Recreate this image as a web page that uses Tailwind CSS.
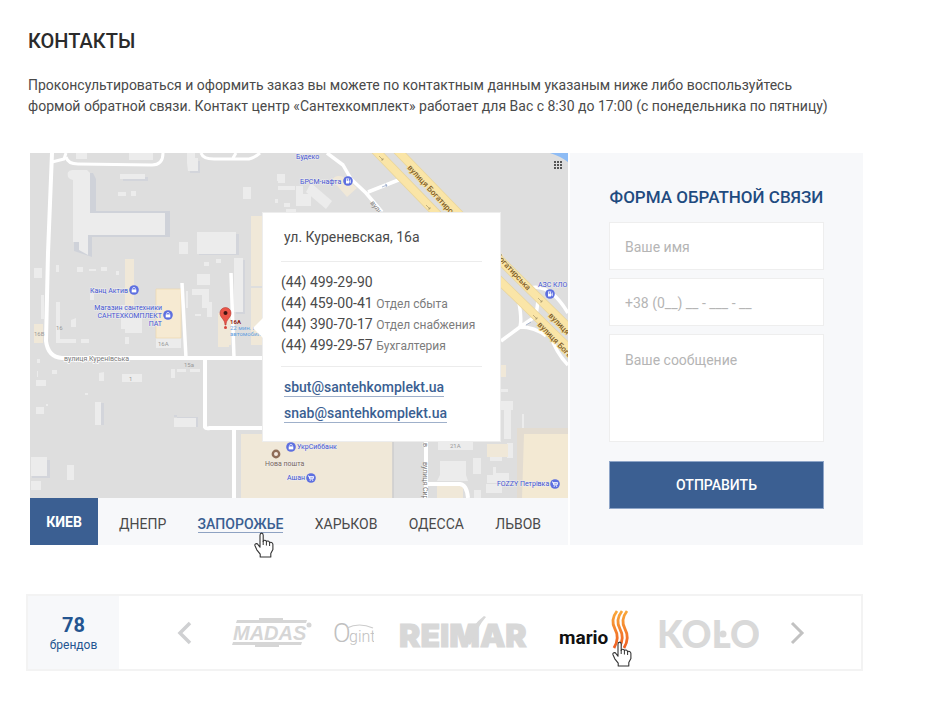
<!DOCTYPE html>
<html lang="ru">
<head>
    <meta charset="UTF-8">
    <meta name="viewport" content="width=device-width, initial-scale=1.0">
    <title>Контакты</title>
    <script src="https://cdn.jsdelivr.net/npm/@tailwindcss/browser@4"></script>
</head>
<body class="bg-white font-[Roboto,sans-serif] text-[14px] text-[#4a4a4a]">
    <!-- Shared shapes -->
    <svg class="hidden">
        <symbol id="hand" viewBox="0 0 20 26">
            <path d="M6 14V3.2C6 .4 9.2.4 9.2 3.2V9.5C9.6 7.6 12.2 7.8 12.4 9.8C13 8.4 15.4 8.8 15.6 10.8C16.4 9.8 18.9 10.2 18.9 12.4V17.5L16.8 21.5V25H6.2V22.2L2.8 17.8L1 13.8C.2 11.6 2.8 10.8 4.2 12.8L6 15.2Z" fill="#fff" stroke="#333" stroke-width="1.1" stroke-linejoin="round"/>
            <path d="M9.2 9V13M12.4 10V13.5M15.6 11V14" stroke="#333" fill="none"/>
        </symbol>
        <symbol id="bag" viewBox="0 0 10 10">
            <circle cx="5" cy="5" r="4.8" fill="#5d6fe0"/>
            <path d="M2.7 4.4H7.3V7.4H2.7Z" fill="#fff"/>
            <path d="M3.6 4.4V3.8A1.4 1.4 0 0 1 6.4 3.8V4.4" fill="none" stroke="#fff" stroke-width=".7"/>
        </symbol>
        <symbol id="cart" viewBox="0 0 10 10">
            <circle cx="5" cy="5" r="4.8" fill="#5d6fe0"/>
            <path d="M2 3H3L3.8 6H7L7.7 3.6H3.4L4 5H7.2" fill="none" stroke="#fff" stroke-width=".9"/>
            <circle cx="4.2" cy="7.2" r=".6" fill="#fff"/><circle cx="6.7" cy="7.2" r=".6" fill="#fff"/>
        </symbol>
        <symbol id="fuel" viewBox="0 0 10 10">
            <circle cx="5" cy="5" r="4.8" fill="#5d6fe0"/>
            <path d="M3 2.5H6V7.5H3Z" fill="#fff"/><path d="M3.7 3.3H5.3V4.6H3.7Z" fill="#5d6fe0"/>
            <path d="M6 5H6.8V6.8H7.5V3.8L6.7 3" fill="none" stroke="#fff" stroke-width=".6"/>
        </symbol>
    </svg>

    <main class="pt-[29px] pr-17 pb-12 pl-[26px]">
        <header class="pl-0.5">
            <h1 class="text-[20px] leading-6 font-medium text-[#2b2b2b]">КОНТАКТЫ</h1>
            <p class="mt-[22px] leading-[21px]">
                Проконсультироваться и оформить заказ вы можете по контактным данным указаным ниже либо воспользуйтесь<br>
                формой обратной связи. Контакт центр «Сантехкомплект» работает для Вас с 8:30 до 17:00 (с понедельника по пятницу)
            </p>
        </header>

        <section class="mt-9 flex gap-0.5 pl-1">
            <!-- Map and city tabs -->
            <div class="flex flex-1 flex-col">
                <div class="relative flex-1">
                    <svg class="absolute inset-0 h-full w-full" viewBox="0 0 538 345" preserveAspectRatio="xMidYMid slice" font-family="Roboto, sans-serif">
                        <rect width="538" height="345" fill="#dedede"/>
                        <path d="M520 0H538V9Q530 3 520 0Z" fill="#8ebcf5"/>
                        <!-- Building shadows -->
                        <path d="M44 20H63L66 26V58H140V84H62V104L44 98Z" fill="#cfd2d9"/>
                        <g fill="#d3d5db">
                            <path d="M93 24H118V28H93ZM160 8H170V20H160ZM169 81H209V102H169ZM206 107H215V161H206ZM68 250H74V272H68ZM144 264H168V274H144ZM2 307H20V325H2ZM144 265H147V262H144ZM454 237H465V285H454Z"/>
                        </g>
                        <!-- Buildings -->
                        <g fill="#ececec">
                            <path d="M42 17Q36 18 38 24Q40 27 43 27V89H49V97L58 102V82H135V60H60V20L57 17Z"/>
                            <path d="M90 21H115V26H90ZM88 39H96V43H88ZM101 38H106V43H101ZM46 0H57V6H46ZM99 0H123V7H99ZM157 0H165V5H168V18H158L157 10ZM167 79H206V101H167ZM149 89H158V101H149ZM204 105H213V159H204ZM213 34H221V46H213ZM248 21H255V30H248V28H247V21ZM248 33H265V37H248ZM266 33H273V45H266ZM254 50H260V54H254ZM256 56H266V59H256ZM245 46H248V50H245ZM4 115H12V125H4ZM26 112H29V119H26ZM47 114H53V119H47ZM59 116H66V118H59ZM71 114H77V118H71ZM86 118H89V122H86ZM174 109H179V113H174ZM186 106H191V110H186ZM167 121H180V132H167ZM162 136H179V155H172V142H162ZM165 161H171V163H165ZM177 149H182V164H177ZM156 138H158V155H156ZM11 142H14V166H11ZM26 149H30V186H46V190H26ZM41 167L46 165V174H41ZM91 152H95V176H91ZM95 162H112V180H95ZM95 184H99V191H95ZM51 186H59V190H51ZM60 140H64V147H60ZM126 185H151V195H126ZM6 227H16V233H6ZM6 254H14V261H6ZM22 217H27V221H22ZM69 220L74 219V228H69ZM92 221H112V229H92ZM141 216H145V225H141ZM147 216H156V219H147ZM160 216H170V219H160ZM65 249H71V272H65ZM144 265H166V274H144ZM1 304H17V323H1ZM37 312H44V327H37ZM1 328H11V337H1ZM54 188H56V190H54ZM7 206H10V210H7ZM7 218H8V224H7ZM55 240H58V242H55ZM16 251H18V253H16Z"/>
                            <path d="M266 41H281V53H266ZM281 30L302 48L296 56L276 39ZM471 248H483V257H481V286H474V257H471ZM492 261H494V275H492ZM408 289H443V297H408ZM410 308H436V322L438 328H407L410 322ZM443 305H451V321H443ZM457 322H463V314H466V320H479V330H457ZM456 331H472V340H456ZM444 337H451V345H444ZM477 290H483V305H477ZM471 236H478V239H471ZM460 303H472V308H460Z"/>
                        </g>
                        <!-- Highlighted blocks -->
                        <g fill="#f0e8d8">
                            <path d="M95 106H104V155H95ZM221 63H232V133H221ZM221 135H232V192H221ZM188 160H201V192H188ZM4 171H13V190H4ZM188 190H199V194H188ZM211 281H363V345H211Z"/>
                            <path d="M457 291H478V304H457ZM407 332Q419 328 433 334V345H407ZM471 212H476V224H471ZM302 27Q306 20 316 25L327 35L317 44Z"/>
                        </g>
                        <path d="M126 136H151V185H126Z" fill="#f6ead2" stroke="#eed9af" stroke-width=".7"/>
                        <path d="M363 281V345" stroke="#cdcdce" stroke-width="1.5"/>
                        <path d="M487 275H538V345H487Z" fill="#e3dcd1"/>
                        <path d="M494 281H538V345H492Z" fill="#f3e9d3"/>
                        <!-- Streets -->
                        <g fill="none" stroke="#fff" stroke-linejoin="round">
                            <path d="M22 0L18 100L16 188Q18 204 32 205L232 205" stroke-width="4"/>
                            <path d="M22 9L34 6L36 0M36 4Q38 11 48 11L122 12Q133 12 133 0M171 0Q173 6 184 6H219Q224 5 230 0M203 5L206 0" stroke-width="3"/>
                            <path d="M152 130L156 205M201 120L204 205" stroke-width="3.5"/>
                            <path d="M175 205V274Q176 276 180 275H232M204 275V345" stroke-width="4"/>
                            <path d="M297 0L313 12L321 26L336 40L352 59M338 39L371 26" stroke-width="3.5"/>
                            <path d="M396 289V345M398 331H430Q437 332 438 345" stroke-width="4"/>
                            <path d="M489 150Q492 166 490 174L471 188M508 148L506 163L490 174Q505 174 516 183M500 135Q520 130 538 160M520 181Q526 200 538 212" stroke-width="3.5"/>
                        </g>
                        <!-- Highways -->
                        <g fill="none" stroke="#e8d59d" stroke-width="9">
                            <path d="M343 -5L408 62L471 129L548 204M365 -5L430 62L471 108L548 184"/>
                        </g>
                        <g fill="none" stroke="#fae5a7" stroke-width="7.5">
                            <path d="M343 -5L408 62L471 129L548 204M365 -5L430 62L471 108L548 184"/>
                        </g>
                        <g fill="none" stroke="#9c8961" stroke-width=".6">
                            <path d="M349 3L353 7M351 7H353V5M396 52L400 56M398 56H400V54M503 162L507 166M505 166H507V164M508 145L512 149M510 149H512V147"/>
                            <path d="M352 34L357 32M355 31L357 32L356 34M496 172L501 169" stroke="#7b90ba"/>
                        </g>
                        <g fill="#7f5d28" stroke="#fae5a7" stroke-width="1.5" paint-order="stroke" font-size="8" font-weight="500">
                            <text transform="translate(377 15) rotate(47)">вулиця Богатирська</text>
                            <text transform="translate(465 103) rotate(47)">Богатирська</text>
                            <text transform="translate(518 163) rotate(46)">вулиця</text>
                            <text transform="translate(507 172) rotate(46)">вулиця Богатирська</text>
                        </g>
                        <!-- Street names and house numbers -->
                        <g fill="#777" font-size="7">
                            <text x="34" y="208" stroke="#fff" stroke-width="1.5" paint-order="stroke">вулиця Куренівська</text>
                            <text transform="translate(340 50) rotate(52)">вулиця</text>
                            <text transform="translate(393 290) rotate(90)" stroke="#fff" stroke-width="1" paint-order="stroke">в</text>
                            <text transform="translate(393 309) rotate(90)">вулиця Сирецька</text>
                        </g>
                        <g fill="#999" font-size="6">
                            <text x="128" y="193">16А</text>
                            <text x="4" y="183">16В</text>
                            <text x="26" y="177">16</text>
                            <text x="154" y="214">15а</text>
                            <text x="99" y="228">1</text>
                            <text x="420" y="295">21А</text>
                        </g>
                        <!-- Places -->
                        <g fill="#4353d0" stroke="#eee" stroke-width="1" paint-order="stroke" font-size="7">
                            <text x="266" y="6">Будеко</text>
                            <text x="270" y="31">БРСМ-нафта</text>
                            <text x="508" y="134">АЗС КЛО</text>
                            <text x="60" y="140">Канц Актив</text>
                            <text x="132" y="157" text-anchor="end">Магазин сантехники</text>
                            <text x="132" y="165" text-anchor="end">САНТЕХКОМПЛЕКТ</text>
                            <text x="132" y="173" text-anchor="end">ПАТ</text>
                            <text x="267" y="296">УкрСиббанк</text>
                            <text x="257" y="327">Ашан</text>
                            <text x="467" y="333">FOZZY Петрівка</text>
                            <text x="235" y="313" fill="#7b6656">Нова пошта</text>
                        </g>
                        <use href="#bag" x="99" y="132" width="10" height="10"/>
                        <use href="#bag" x="133" y="157" width="10" height="10"/>
                        <use href="#bag" x="256" y="289" width="10" height="10"/>
                        <use href="#fuel" x="313" y="23" width="10" height="10"/>
                        <use href="#fuel" x="515" y="136" width="10" height="10"/>
                        <use href="#cart" x="276" y="320" width="10" height="10"/>
                        <use href="#cart" x="520" y="326" width="10" height="10"/>
                        <circle cx="246" cy="301" r="3.2" fill="#f3e9e0" stroke="#8f6d58" stroke-width="2.4"/>
                        <!-- Address pin -->
                        <path d="M195 172C195 166 190 165 190 160A5.5 5.5 0 0 1 201 160C201 165 196 166 196 172Z" fill="#ea5548" stroke="#b8382f" stroke-width=".6"/>
                        <circle cx="195.500" cy="160" r="2" fill="#401411"/>
                        <circle cx="195.500" cy="174.500" r="1.500" fill="#d6453a"/>
                        <text x="200" y="171" fill="#8b1a14" font-size="6" font-weight="700">16А</text>
                        <text x="200" y="177" fill="#5f9fe0" font-size="6">22 мин. на</text>
                        <text x="200" y="183" fill="#5f9fe0" font-size="6">автомобиле</text>
                        <!-- Grid handle -->
                        <path d="M524 8H526V10H524ZM527 8H529V10H527ZM530 8H532V10H530ZM524 11H526V13H524ZM527 11H529V13H527ZM530 11H532V13H530ZM524 14H526V16H524ZM527 14H529V16H527ZM530 14H532V16H530Z" fill="#555"/>
                    </svg>

                    <!-- Address card -->
                    <address class="absolute top-[59px] left-[232px] w-[239px] border border-[#ededed] bg-white px-[18px] pb-[18px] not-italic">
                        <svg class="absolute top-[105px] -left-2.5 h-5 w-2.5" viewBox="0 0 10 20"><path d="M10 0L0 10L10 20Z" fill="#fff"/></svg>
                        <p class="border-b border-[#ececec] pl-[3px] leading-12">ул. Куреневская, 16а</p>
                        <ul class="border-b border-[#ececec] py-2.5 leading-[21px] whitespace-nowrap">
                            <li>(44) 499-29-90</li>
                            <li>(44) 459-00-41 <span class="text-[12px] leading-none text-[#7c7c7c]">Отдел сбыта</span></li>
                            <li>(44) 390-70-17 <span class="text-[12px] leading-none text-[#7c7c7c]">Отдел снабжения</span></li>
                            <li>(44) 499-29-57 <span class="text-[12px] leading-none text-[#7c7c7c]">Бухгалтерия</span></li>
                        </ul>
                        <p class="flex flex-col items-start gap-2 pt-3 pl-[3px] font-medium text-[#3b5f92]">
                            <a class="border-b border-[#9fb0ca] leading-[17px]" href="mailto:sbut@santehkomplekt.ua">sbut@santehkomplekt.ua</a>
                            <a class="border-b border-[#9fb0ca] leading-[17px]" href="mailto:snab@santehkomplekt.ua">snab@santehkomplekt.ua</a>
                        </p>
                    </address>
                </div>

                <nav class="flex h-[47px] bg-[#f7f8fa]">
                    <button class="w-[68px] bg-[#3b5f92] pt-0.5 font-bold text-white" type="button">КИЕВ</button>
                    <div class="flex flex-1 items-center justify-between pt-1.5 pr-[27px] pl-[21px]">
                        <button type="button">ДНЕПР</button>
                        <button class="relative border-b border-[#8ea2c2] leading-4 font-medium text-[#3b5f92]" type="button">
                            ЗАПОРОЖЬЕ
                            <svg class="absolute top-4 left-14 h-[26px] w-5"><use href="#hand"/></svg>
                        </button>
                        <button type="button">ХАРЬКОВ</button>
                        <button type="button">ОДЕССА</button>
                        <button type="button">ЛЬВОВ</button>
                    </div>
                </nav>
            </div>

            <!-- Feedback form -->
            <form class="flex w-[293px] flex-col gap-2 bg-[#f7f8fa] px-[39px] pt-8 pb-9">
                <h2 class="mb-[5px] text-center text-[17px] leading-6 font-medium whitespace-nowrap text-[#1f4b80]">ФОРМА ОБРАТНОЙ СВЯЗИ</h2>
                <input class="h-12 border border-[#eeeeee] bg-white px-[15px] pt-0.5 placeholder:text-[#b5b5b5]" type="text" name="name" aria-label="Ваше имя" placeholder="Ваше имя">
                <input class="h-12 border border-[#eeeeee] bg-white px-[15px] pt-0.5 placeholder:text-[#b5b5b5]" type="tel" name="phone" aria-label="Телефон" placeholder="+38 (0__) __ - ___ - __">
                <textarea class="h-27 resize-none border border-[#eeeeee] bg-white px-[15px] py-[15px] placeholder:text-[#b5b5b5]" name="message" aria-label="Ваше сообщение" placeholder="Ваше сообщение"></textarea>
                <button class="mt-[11px] h-12 border border-[#8ea5c8] bg-[#3b5f92] font-medium text-white" type="submit">ОТПРАВИТЬ</button>
            </form>
        </section>

        <!-- Brands -->
        <section class="mt-[49px] flex h-[77px] border-2 border-[#f3f3f3]">
            <div class="flex w-[91px] flex-col items-center justify-center bg-[#f7f8fa] text-[#245590]">
                <strong class="text-[20px] leading-6 font-bold">78</strong>
                <span class="text-[12px] leading-4">брендов</span>
            </div>
            <div class="flex flex-1 items-center pr-14 pl-[57px]">
                <button type="button" aria-label="Назад">
                    <svg class="h-6 w-4" viewBox="0 0 16 24" fill="none" stroke="#cfd0d2" stroke-width="3.500"><path d="M14 2L4 12L14 22"/></svg>
                </button>
                <div class="flex flex-1 items-center justify-between pr-[30px] pl-10">
                    <a href="#madas" aria-label="Madas">
                        <svg class="h-8 w-20" viewBox="0 0 80 32" fill="#d6d6d6">
                            <path d="M27 1H51V3H75L74 6H4L5 3H27ZM1 25H70L69 28H47V30H23V28H0Z"/>
                            <text x="1" y="22.500" font-family="Liberation Sans, sans-serif" font-size="20" font-weight="700" font-style="italic">MADAS</text>
                            <circle cx="77" cy="8" r="2.500"/>
                        </svg>
                    </a>
                    <a href="#ogint" aria-label="Ogint">
                        <svg class="h-9 w-10" viewBox="0 0 40 36" fill="#c0c0c0" font-family="Roboto, sans-serif" font-weight="300">
                            <text x="-1" y="27" font-size="26">O</text>
                            <text x="15" y="27" font-size="16">gint</text>
                            <path d="M13 13Q25 7 39 13" fill="none" stroke="#cccccc" stroke-width="1.2"/>
                        </svg>
                    </a>
                    <a href="#reimar" aria-label="Reimar">
                        <svg class="h-10 w-[132px]" viewBox="-2 0 132 40" fill="#d8d8d8">
                            <text x="0" y="34" font-family="Inter, sans-serif" font-size="32" font-weight="900" stroke="#d8d8d8">REIMAR</text>
                            <path d="M66 28Q73 12 85 3L87 4Q79 13 76 24L71 32Z"/>
                        </svg>
                    </a>
                    <a class="relative" href="#mario" aria-label="Mario">
                        <svg class="h-12 w-[86px]" viewBox="-8 0 86 48">
                            <defs><linearGradient id="flame" x2="0" y2="1"><stop stop-color="#f9a83a"/><stop offset="1" stop-color="#ee5f24"/></linearGradient></defs>
                            <text x="0" y="35" fill="#111" font-family="Roboto, sans-serif" font-size="19" font-weight="700">mario</text>
                            <g fill="none" stroke="url(#flame)" stroke-width="2.800">
                                <path d="M58 2Q51 11 56 20Q61 29 55 39M63 2Q56 11 61 20Q66 29 60 39M68 2Q61 11 66 20Q71 29 65 39"/>
                            </g>
                        </svg>
                        <svg class="absolute top-8 left-[61px] h-[26px] w-5"><use href="#hand"/></svg>
                    </a>
                    <a href="#kolo" aria-label="Kolo">
                        <svg class="h-9 w-25" viewBox="0 0 100 36" fill="#d9d9d9">
                            <text x="-2" y="33" font-family="Lato, sans-serif" font-size="37" font-weight="900">KOLO</text>
                            <circle cx="64" cy="19" r="3.500"/>
                        </svg>
                    </a>
                </div>
                <button type="button" aria-label="Вперёд">
                    <svg class="h-6 w-4" viewBox="0 0 16 24" fill="none" stroke="#c2c2c2" stroke-width="3"><path d="M3 2L13 12L3 22"/></svg>
                </button>
            </div>
        </section>
    </main>
</body>
</html>
